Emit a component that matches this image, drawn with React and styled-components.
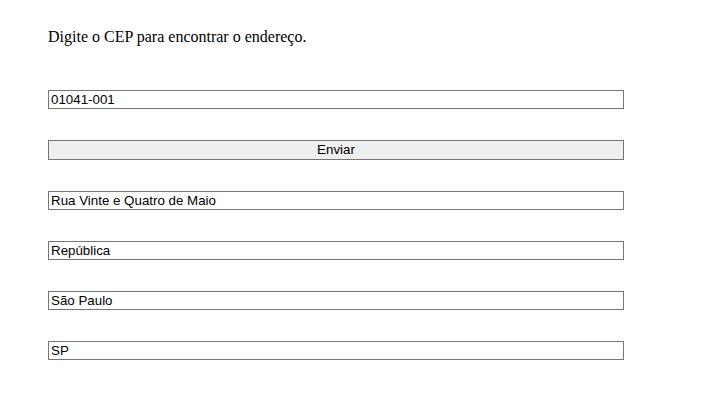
import React from 'react';
import styled, { createGlobalStyle } from 'styled-components';

const GlobalStyle = createGlobalStyle`
    body {
        margin: 0;
        background: #fff;
        font-family: "Liberation Serif", "Times New Roman", serif;
    }
`;

const Page = styled.div`
    display: flex;
    flex-direction: column;
    padding: 28px 48px;
    width: 576px;
`;

const Intro = styled.p`
    margin: 0 0 44px;
    font-size: 16px;
    line-height: 18px;
    color: #000;
`;

const Form = styled.div`
    display: flex;
    flex-direction: column;
    gap: 31px;
`;

const Field = styled.input`
    box-sizing: border-box;
    width: 576px;
    height: 19px;
    margin: 0;
    padding: 1px 2px;
    border: 1px solid #767676;
    font-family: "Liberation Sans", Arial, sans-serif;
    font-size: 13.33px;
    color: #000;
    background: #fff;
`;

const SendButton = styled.button`
    box-sizing: border-box;
    width: 576px;
    height: 20px;
    margin: 0;
    padding: 0 6px 1px;
    border: 1px solid #767676;
    background: #efefef;
    font-family: "Liberation Sans", Arial, sans-serif;
    font-size: 13.33px;
    color: #000;
`;

const fields = ['Rua Vinte e Quatro de Maio', 'República', 'São Paulo', 'SP'];

export default function App() {
    return <>
        <GlobalStyle />
        <Page>
            <Intro>Digite o CEP para encontrar o endereço.</Intro>
            <Form>
                <Field defaultValue="01041-001" />
                <SendButton>Enviar</SendButton>
                {fields.map(f => <Field key={f} defaultValue={f} />)}
            </Form>
        </Page>
    </>;
}
